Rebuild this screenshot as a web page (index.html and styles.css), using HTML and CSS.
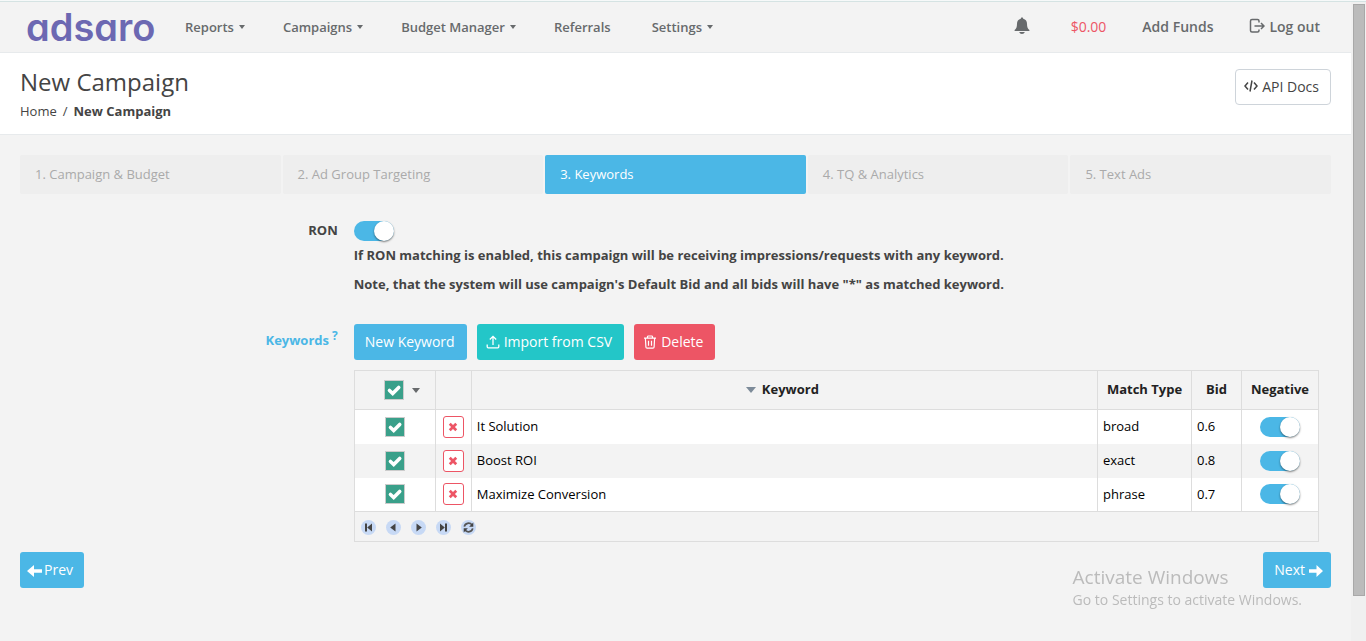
FILE: index.html
```html
<!DOCTYPE html>
<html lang="en">
<head>
<meta charset="utf-8">
<title>New Campaign</title>
<link rel="stylesheet" href="styles.css">
</head>
<body>
<svg class="defs" aria-hidden="true">
  <symbol id="cross" viewBox="0 0 10 10"><path d="M2.7 .8 5 3.1 7.3 .8 9.2 2.7 6.9 5 9.2 7.3 7.3 9.2 5 6.9 2.7 9.2 .8 7.3 3.1 5 .8 2.7z" fill="currentColor"/></symbol>
</svg>
<div class="page">
  <header class="topbar">
    <a class="logo" href="#">adsaro</a>
    <nav class="menu">
      <a class="menu-link has-caret" href="#">Reports</a>
      <a class="menu-link has-caret" href="#">Campaigns</a>
      <a class="menu-link has-caret" href="#">Budget Manager</a>
      <a class="menu-link plain" href="#">Referrals</a>
      <a class="menu-link has-caret" href="#">Settings</a>
    </nav>
    <div class="account">
      <a href="#" class="bell" aria-label="Notifications"><svg width="16" height="18" viewBox="0 0 16 18"><path d="M8 .5c.8 0 1.2.5 1.2 1.2C11.800 2.200 13 4.300 13 6.800c0 3.400.8 4.900 2.400 6.300v.9H.6v-.9C2.200 11.700 3 10.200 3 6.800 3 4.300 4.200 2.200 6.800 1.700 6.800 1 7.200.5 8 .5zM5.200 15h5.600c-.4 1.300-1.400 2-2.800 2s-2.400-.7-2.800-2z" fill="#676a6c"/></svg></a>
      <a href="#" class="balance">$0.00</a>
      <a href="#" class="funds">Add Funds</a>
      <a href="#" class="logout"><svg width="16" height="16" viewBox="0 0 16 16" fill="none" stroke="#676a6c" stroke-width="1.500"><path d="M10 4.500V3q0-1.500-1.500-1.500H3Q1.500 1.500 1.500 3v9.500Q1.500 14 3 14h5.500Q10 14 10 12.500V11.500M5.500 8H15M12 5l3 3-3 3"/></svg>Log out</a>
    </div>
  </header>

  <section class="heading">
    <div>
      <h1>New Campaign</h1>
      <nav class="crumbs"><a href="#">Home</a><span>/</span><strong>New Campaign</strong></nav>
    </div>
    <a class="api" href="#"><svg width="14" height="14" viewBox="0 0 14 14" fill="none" stroke="#444" stroke-width="1.500"><path d="M4 3.500 1 7l3 3.500M10 3.500 13 7l-3 3.500M8 1.500 6 12.500"/></svg>API Docs</a>
  </section>

  <main>
    <nav class="steps">
      <a href="#">1. Campaign &amp; Budget</a>
      <a href="#">2. Ad Group Targeting</a>
      <a href="#" class="current">3. Keywords</a>
      <a href="#">4. TQ &amp; Analytics</a>
      <a href="#">5. Text Ads</a>
    </nav>

    <div class="form">
      <div class="field-name"><label for="ron">RON</label></div>
      <div class="field ron-field">
        <input type="checkbox" class="switch" id="ron" checked>
        <p>If RON matching is enabled, this campaign will be receiving impressions/requests with any keyword.</p>
        <p>Note, that the system will use campaign's Default Bid and all bids will have "*" as matched keyword.</p>
      </div>

      <div class="field-name keywords-name">Keywords<sup>?</sup></div>
      <div class="field">
        <div class="actions">
          <button type="button" class="btn blue">New Keyword</button>
          <button type="button" class="btn teal"><svg width="14" height="14" viewBox="0 0 14 14" fill="none" stroke="#fff" stroke-width="1.300"><path d="M1.200 9.500v2.300q0 1 1 1h9.600q1 0 1-1V9.500M7 10V1.500M3.800 4.500 7 1.300l3.200 3.200"/></svg>Import from CSV</button>
          <button type="button" class="btn red"><svg width="14" height="14" viewBox="0 0 14 14" fill="none" stroke="#fff" stroke-width="1.200"><path d="M1 3.200h12M4.500 3V1.800q0-.8.800-.8h3.400q.8 0 .8.800V3M2.400 3.500l.5 8.500q0 1.200 1.200 1.200h5.800q1.200 0 1.200-1.200l.5-8.500M5.500 5.800v5M8.500 5.800v5"/></svg>Delete</button>
        </div>

        <table class="grid">
          <colgroup><col class="c-check"><col class="c-remove"><col><col class="c-match"><col class="c-bid"><col class="c-neg"></colgroup>
          <thead>
            <tr>
              <th><span class="check-all"><input type="checkbox" class="check" aria-label="Select all" checked><button type="button" class="drop" aria-label="Selection options"></button></span></th>
              <th></th>
              <th><span class="sorted">Keyword</span></th>
              <th>Match Type</th>
              <th>Bid</th>
              <th>Negative</th>
            </tr>
          </thead>
          <tbody>
            <tr>
              <td class="mid"><input type="checkbox" class="check" aria-label="Select It Solution" checked></td>
              <td class="mid"><button type="button" class="remove" aria-label="Remove"><svg width="10" height="10"><use href="#cross"/></svg></button></td>
              <td>It Solution</td><td>broad</td><td>0.6</td>
              <td class="mid"><input type="checkbox" class="switch" aria-label="Negative" checked></td>
            </tr>
            <tr>
              <td class="mid"><input type="checkbox" class="check" aria-label="Select Boost ROI" checked></td>
              <td class="mid"><button type="button" class="remove" aria-label="Remove"><svg width="10" height="10"><use href="#cross"/></svg></button></td>
              <td>Boost ROI</td><td>exact</td><td>0.8</td>
              <td class="mid"><input type="checkbox" class="switch" aria-label="Negative" checked></td>
            </tr>
            <tr>
              <td class="mid"><input type="checkbox" class="check" aria-label="Select Maximize Conversion" checked></td>
              <td class="mid"><button type="button" class="remove" aria-label="Remove"><svg width="10" height="10"><use href="#cross"/></svg></button></td>
              <td>Maximize Conversion</td><td>phrase</td><td>0.7</td>
              <td class="mid"><input type="checkbox" class="switch" aria-label="Negative" checked></td>
            </tr>
          </tbody>
        </table>
        <div class="pager">
          <button type="button" aria-label="First page"><svg width="15" height="15" viewBox="0 0 15 15"><path d="M4 3.500h2v8H4zM11 3.500v8L6.200 7.500z"/></svg></button>
          <button type="button" aria-label="Previous page"><svg width="15" height="15" viewBox="0 0 15 15"><path d="M9.500 3.500v8L4.200 7.500z"/></svg></button>
          <button type="button" aria-label="Next page"><svg width="15" height="15" viewBox="0 0 15 15"><path d="M5.500 3.500v8l5.300-4z"/></svg></button>
          <button type="button" aria-label="Last page"><svg width="15" height="15" viewBox="0 0 15 15"><path d="M9 3.500h2v8H9zM4 3.500v8l4.800-4z"/></svg></button>
          <button type="button" aria-label="Reload"><svg width="15" height="15" viewBox="0 0 15 15"><path d="M3.300 6.700A4.300 4.300 0 0 1 11 5M11.700 8.300A4.300 4.300 0 0 1 4 10" fill="none" stroke="#555" stroke-width="1.700"/><path d="M12.300 2.500v4.200H8.100zM2.700 12.500V8.300h4.200z"/></svg></button>
        </div>
      </div>
    </div>

    <div class="wizard-nav">
      <button type="button" class="btn blue prev"><svg width="15" height="14" viewBox="0 0 15 14"><path d="M0 8 7 2v4.300h8v3.400H7V14z" fill="#fff"/></svg>Prev</button>
      <button type="button" class="btn blue next">Next<svg width="14" height="14" viewBox="0 0 14 14"><path d="M14 8 7.500 2v4.300H0v3.400h7.500V14z" fill="#fff"/></svg></button>
    </div>
  </main>
</div>
<div class="scroll"><div class="thumb"></div></div>
<div class="watermark"><div class="wm-title">Activate Windows</div><div>Go to Settings to activate Windows.</div></div>
</body>
</html>
```
FILE: styles.css
```css
* { box-sizing: border-box; }
html { height: 100%; background: #f3f3f3; }
body {
  margin: 0;
  min-height: 100%;
  display: flex;
  padding-top: 1px;
  border-top: 1px solid #f6f9f9;
  background: linear-gradient(#d5e3e3 1px, #f3f3f3 1px);
  color: #444;
  font: 13px/19px "Open Sans", sans-serif;
}
a { color: inherit; text-decoration: none; }
button, input { font: inherit; margin: 0; }
svg { display: block; }
.defs { display: none; }
.page { flex: 1; min-width: 0; }

.topbar {
  display: flex;
  align-items: center;
  height: 51px;
  padding: 0 31px 0 26px;
  border-bottom: 1px solid #e7eaec;
  color: #676a6c;
  font-weight: 600;
}
.logo {
  width: 159px;
  color: #6c68b2;
  font: 600 38px/48px Inter, sans-serif;
  font-feature-settings: "cv11";
}
.menu { display: flex; gap: 38px; }
.menu-link { display: flex; align-items: center; gap: 5px; }
.plain { padding-right: 3px; }
.has-caret::after {
  content: "";
  border: 3px solid transparent;
  border-top: 4px solid #676a6c;
  border-bottom: 0;
}
.account {
  display: flex;
  align-items: center;
  gap: 36px;
  margin-left: auto;
  padding-bottom: 2px;
  font-size: 14px;
}
.bell { margin-right: 5px; }
.balance { color: #ed5565; font-weight: 400; }
.logout { display: flex; align-items: center; gap: 4px; }

.heading {
  display: flex;
  justify-content: space-between;
  align-items: flex-start;
  padding: 16px 20px 13px;
  border-bottom: 1px solid #e7eaec;
  background: #fff;
}
h1 { margin: 0 0 8px; font-size: 24px; line-height: 25px; font-weight: 400; }
.crumbs { display: flex; gap: 6px; }
.api {
  display: flex;
  align-items: center;
  gap: 4px;
  height: 36px;
  padding: 0 11px 2px 8px;
  border: 1px solid #ced4da;
  border-radius: 4px;
  font-size: 14px;
}

main { padding: 20px 0; }
.steps { display: grid; grid-template-columns: repeat(5, 1fr); gap: 2px; margin: 0 20px; }
.steps a { padding: 10px 15px; border-radius: 2px; background: #eee; color: #aaa; }
.steps .current { background: #4bb7e6; color: #fff; }

.form { display: grid; grid-template-columns: 1fr 3fr; row-gap: 30px; padding: 27px 17px 0 7px; }
.field-name { padding-right: 1px; text-align: right; font-weight: 700; }
.field { min-width: 0; padding: 0 15px; }
.ron-field p { margin: 0; font-weight: 700; }
.ron-field p + p { margin-top: 10px; }
.ron-field .switch { margin-bottom: 5px; }
.keywords-name { padding-top: 7px; color: #4bb7e6; }
sup { margin-left: 3px; line-height: 0; font-size: 12px; }

.switch {
  appearance: none;
  display: block;
  width: 40px;
  height: 20px;
  border-radius: 10px;
  background: #ccc;
}
.switch:checked { background: #4bb7e6; }
.switch::before {
  content: "";
  display: block;
  width: 20px;
  height: 20px;
  border-radius: 50%;
  background: #fff;
  box-shadow: 0 1px 2px rgba(0, 0, 0, .5);
}
.switch:checked::before { margin-left: 20px; }

.actions { display: flex; gap: 10px; margin-bottom: 10px; }
.btn {
  display: flex;
  align-items: center;
  gap: 4px;
  height: 36px;
  padding: 0 12px 2px 11px;
  border: 0;
  border-radius: 3px;
  color: #fff;
  font-size: 14px;
}
.btn svg { margin-top: 2px; }
.blue { background: #4bb7e6; }
.teal { background: #23c6c8; padding-left: 9px; }
.red { background: #ed5565; padding-left: 9px; }

.grid { width: 100%; table-layout: fixed; border-collapse: collapse; color: #000; border-bottom: 1px solid #ddd; }
.grid th, .grid td { border: 1px solid #ddd; padding: 0 5px; }
.grid th { height: 39px; padding: 0 0 2px; color: #222; font-weight: 700; }
.grid td { height: 34px; border-top: 0; border-bottom: 0; background: #fff; }
.grid tbody tr:nth-child(even) td { background: #f3f3f3; }
.grid tbody .mid { padding: 0; }
.mid > * { margin: 0 auto; }
.c-check { width: 81px; }
.c-remove { width: 36px; }
.c-match { width: 94px; }
.c-bid { width: 50px; }
.c-neg { width: 77px; }
.check {
  appearance: none;
  display: block;
  width: 20px;
  height: 20px;
  border: 1px solid #ccc;
}
.check:checked {
  background: #3aa08a url("data:image/svg+xml,%3Csvg xmlns='http://www.w3.org/2000/svg' viewBox='0 0 18 18'%3E%3Cpath d='M4.500 9.500l3.200 3L13.700 6.500' fill='none' stroke='white' stroke-width='3.600' stroke-linecap='round'/%3E%3C/svg%3E") center / 18px 18px no-repeat;
}
.check-all { display: flex; justify-content: center; align-items: center; gap: 8px; padding: 2px 0 0 14px; }
.drop { width: 8px; height: 20px; padding: 0; border: 0; background: none; }
.drop::before, .sorted::before {
  content: "";
  display: block;
  width: 0;
  border: 4px solid transparent;
  border-top: 5px solid #676a6c;
  border-bottom: 0;
}
.sorted { display: inline-flex; align-items: center; gap: 6px; padding-right: 4px; }
.sorted::before { border-width: 6px 5px 0; border-top-color: #7d8b99; }
.remove {
  display: grid;
  place-items: center;
  width: 21px;
  height: 22px;
  padding: 0;
  border: 1px solid #ed5565;
  border-radius: 3px;
  background: #fff;
  color: #ed5565;
}
.pager { display: flex; gap: 10px; padding: 8px 6px 6px; border: 1px solid #ddd; border-top: 0; }
.pager button { padding: 0; border: 0; border-radius: 50%; background: #c7d9f5; }
.pager svg { fill: #444; }

.wizard-nav { display: flex; justify-content: space-between; margin: 10px 20px 0; }
.prev { gap: 2px; padding: 0 11px 2px 7px; }
.next { gap: 4px; padding: 0 8px 2px 11px; }

.scroll { width: 15px; padding: 2px 1px 0 2px; background: #f0f0f0; }
.thumb { height: 93%; border: 1px solid #a8a8a8; background: #bbb; }
.watermark { position: fixed; right: 64px; bottom: 31px; color: #bbb; font-size: 14px; line-height: 21px; }
.wm-title { font-size: 19px; line-height: 24px; }
```
